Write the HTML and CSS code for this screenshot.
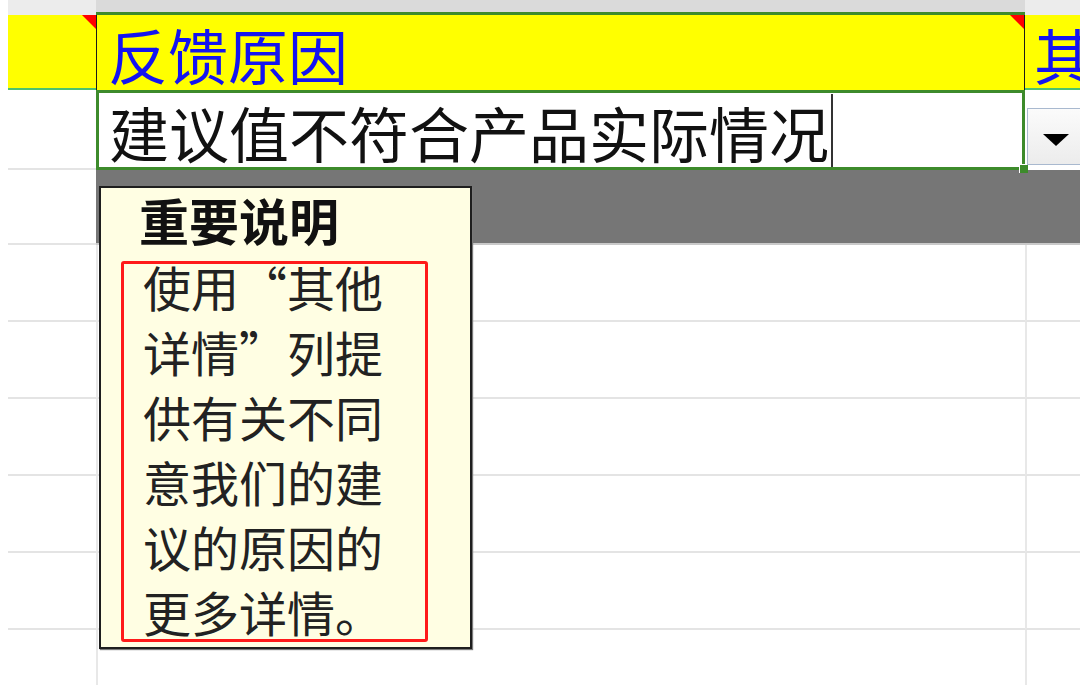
FILE: index.html
```html
<!DOCTYPE html>
<html lang="zh-CN">
<head>
<meta charset="utf-8">
<title>反馈原因</title>
<link rel="stylesheet" href="styles.css">
</head>
<body>
<div class="sheet">
  <div class="g"></div><div class="hA"></div><div class="hB"></div><div class="hC"></div>

  <div class="g"></div>
  <div class="r1A"><span class="flag"></span></div>
  <div class="r1B"><span class="head">反馈原因</span><span class="flag"></span></div>
  <div class="r1C"><span class="head">其</span></div>

  <div class="g"></div>
  <div class="r2A"></div>
  <div class="r2B"><span class="val">建议值不符合产品实际情况</span><span class="caret"></span><span class="handle"></span></div>
  <div class="r2C"><div class="dd"><span class="tri"></span></div></div>

  <div class="g"></div><div class="r3A"></div><div class="r3B"></div><div class="r3C"></div>

  <div class="g"></div><div class="cA"></div><div class="cB"></div><div class="cC"></div>
  <div class="g"></div><div class="cA"></div><div class="cB"></div><div class="cC"></div>
  <div class="g"></div><div class="cA"></div><div class="cB"></div><div class="cC"></div>
  <div class="g"></div><div class="cA"></div><div class="cB"></div><div class="cC"></div>
  <div class="g"></div><div class="cA"></div><div class="cB"></div><div class="cC"></div>
  <div class="g"></div><div class="cA"></div><div class="cB"></div><div class="cC"></div>

  <div class="note">
    <div class="note-title">重要说明</div>
    <div class="note-body">使用“其他详情”列提供有关不同意我们的建议的原因的更多详情。</div>
    <div class="mark"></div>
  </div>
</div>
</body>
</html>
```

FILE: styles.css
```css
html, body {
  margin: 0;
  padding: 0;
  background: #ffffff;
}
body {
  width: 1080px;
  height: 685px;
  overflow: hidden;
  font-family: "Noto Sans CJK SC", "Noto Sans", sans-serif;
}
.sheet {
  position: relative;
  display: grid;
  grid-template-columns: 8px 88px 929px 55px;
  grid-template-rows: 15px 75px 80px 75px repeat(6, 77px);
}
.sheet > div { box-sizing: border-box; }

.g { background: #ffffff; }

/* header strip */
.hA, .hC { background: #ececec; }
.hB {
  background: #dadada;
  border-bottom: 3px solid #3d8b2b;
}

/* row 1 */
.r1A, .r1B, .r1C {
  background: #ffff00;
  position: relative;
}
.r1A, .r1C { border-bottom: 2px solid #4cc26e; }
.r1B {
  border-left: 1px solid #1a1a1a;
  border-right: 1px solid #1a1a1a;
  padding: 9px 0 0 11px;
}
.r1C { padding: 9px 0 0 9px; overflow: hidden; }
.head {
  display: block;
  font-size: 60px;
  line-height: 60px;
  color: #1414f0;
  white-space: nowrap;
}
.flag {
  position: absolute;
  top: 0;
  right: 0;
  width: 0;
  height: 0;
  border-top: 14px solid #ff0000;
  border-left: 14px solid transparent;
}

/* row 2 */
.r2A { border-bottom: 2px solid #e4e4e4; }
.r2B {
  position: relative;
  display: flex;
  align-items: stretch;
  border: 3px solid #3d8b2b;
  padding: 0 0 0 10px;
}
.val {
  align-self: center;
  font-size: 60px;
  line-height: 60px;
  color: #111111;
  white-space: nowrap;
  margin-top: 4px;
}
.caret {
  width: 2px;
  background: #333333;
  margin: 1px 0 0 2px;
}
.handle {
  position: absolute;
  right: -6px;
  bottom: -6px;
  width: 8px;
  height: 8px;
  background: #3d8b2b;
  border-left: 1px solid #ffffff;
  border-top: 1px solid #ffffff;
}
.r2C { position: relative; }
.dd {
  position: absolute;
  left: 2px;
  top: 18px;
  width: 60px;
  height: 57px;
  box-sizing: border-box;
  border: 1px solid #a9b9cf;
  background: linear-gradient(#fbfbfb, #ececec);
}
.tri {
  position: absolute;
  left: 15px;
  top: 25px;
  width: 0;
  height: 0;
  border-left: 13px solid transparent;
  border-right: 13px solid transparent;
  border-top: 12px solid #000000;
}

/* grey band */
.r3A { border-bottom: 2px solid #e4e4e4; }
.r3B, .r3C {
  background: #767676;
  border-bottom: 2px solid #c9c9c9;
}

/* empty rows */
.cA { border-bottom: 2px solid #e4e4e4; }
.cB {
  border-bottom: 2px solid #e4e4e4;
  border-left: 2px solid #e8e8e8;
}
.cC {
  border-bottom: 2px solid #e4e4e4;
  border-left: 2px solid #e8e8e8;
}

/* comment box */
.note {
  position: absolute;
  left: 99px;
  top: 186px;
  width: 373px;
  height: 463px;
  box-sizing: border-box;
  background: #fffee3;
  border: 2px solid #1e1e1e;
  box-shadow: 1px 1px 1px #7a7a7a;
  padding: 1px 0 0 38px;
}
.note-title {
  font-size: 50px;
  line-height: 60px;
  font-weight: bold;
  color: #111111;
}
.note-body {
  width: 242px;
  margin: 5px 0 0 4px;
  font-size: 48px;
  line-height: 65px;
  color: #222222;
}
.mark {
  position: absolute;
  left: 20px;
  top: 73px;
  width: 307px;
  height: 381px;
  box-sizing: border-box;
  border: 3px solid #ff1a1a;
  border-radius: 3px;
}
```
